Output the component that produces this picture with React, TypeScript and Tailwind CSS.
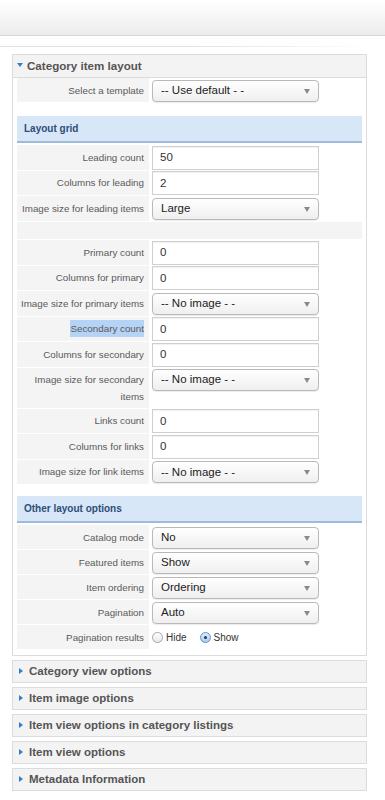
import React from "react";

type Field =
  | { kind: "input"; label: string; value: string; selected?: boolean }
  | { kind: "select"; label: string; value: string; tall?: boolean }
  | { kind: "radio"; label: string }
  | { kind: "spacer" };

const gridFields: Field[] = [
  { kind: "input", label: "Leading count", value: "50" },
  { kind: "input", label: "Columns for leading", value: "2" },
  { kind: "select", label: "Image size for leading items", value: "Large" },
  { kind: "spacer" },
  { kind: "input", label: "Primary count", value: "0" },
  { kind: "input", label: "Columns for primary", value: "0" },
  { kind: "select", label: "Image size for primary items", value: "-- No image - -" },
  { kind: "input", label: "Secondary count", value: "0", selected: true },
  { kind: "input", label: "Columns for secondary", value: "0" },
  { kind: "select", label: "Image size for secondary items", value: "-- No image - -", tall: true },
  { kind: "input", label: "Links count", value: "0" },
  { kind: "input", label: "Columns for links", value: "0" },
  { kind: "select", label: "Image size for link items", value: "-- No image - -" },
];

const otherFields: Field[] = [
  { kind: "select", label: "Catalog mode", value: "No" },
  { kind: "select", label: "Featured items", value: "Show" },
  { kind: "select", label: "Item ordering", value: "Ordering" },
  { kind: "select", label: "Pagination", value: "Auto" },
  { kind: "radio", label: "Pagination results" },
];

const collapsed = [
  "Category view options",
  "Item image options",
  "Item view options in category listings",
  "Item view options",
  "Metadata Information",
];

function Select({ value }: { value: string }) {
  return (
    <div className="relative flex h-[22px] w-[167px] items-center rounded-[4px] border border-[#b9b9b9] bg-gradient-to-b from-white to-[#efefef] pl-[8px] text-[11.5px] text-[#222] shadow-[0_1px_1px_rgba(0,0,0,0.08)]">
      {value}
      <span className="absolute right-[8px] top-[8px] h-0 w-0 border-x-[3px] border-t-[5px] border-x-transparent border-t-[#8a8a8a]" />
    </div>
  );
}

function Input({ value }: { value: string }) {
  return (
    <div className="flex h-[24px] w-[167px] items-center border border-[#cfcfcf] bg-white pl-[7px] text-[11.5px] text-[#333] shadow-[inset_0_1px_1px_rgba(0,0,0,0.06)]">
      {value}
    </div>
  );
}

function Radio({ checked }: { checked?: boolean }) {
  return checked ? (
    <span className="flex h-[11px] w-[11px] items-center justify-center rounded-full border border-[#5f93cf] bg-gradient-to-b from-[#dcebfb] to-[#a9cdf1]">
      <span className="h-[3px] w-[3px] rounded-full bg-[#1d3b5e]" />
    </span>
  ) : (
    <span className="h-[11px] w-[11px] rounded-full border border-[#a5a5a5] bg-gradient-to-b from-white to-[#e9e9e9]" />
  );
}

function Row({ field, h }: { field: Field; h: string }) {
  if (field.kind === "spacer") {
    return <div className="h-[18.5px] border-b border-white bg-[#f4f4f4]" />;
  }
  const tall = field.kind === "select" && field.tall;
  return (
    <div className={`flex ${tall ? "h-[41px]" : h}`}>
      <div className="flex w-[132px] shrink-0 items-center justify-end border-b border-white bg-[#f4f4f4] pr-[5px] text-right text-[9.8px] leading-[17px] whitespace-nowrap text-[#5a5a5a]">
        {tall ? (
          <span>
            Image size for secondary
            <br />
            items
          </span>
        ) : field.kind === "input" && field.selected ? (
          <span className="bg-[#b5d3f5]">{field.label}</span>
        ) : (
          field.label
        )}
      </div>
      <div className={`flex flex-1 pl-[3px] ${tall ? "items-start pt-[1.5px]" : "items-center"}`}>
        {field.kind === "input" && <Input value={field.value} />}
        {field.kind === "select" && <Select value={field.value} />}
        {field.kind === "radio" && (
          <div className="flex items-center text-[10px] text-[#333]">
            <Radio />
            <span className="ml-[3px]">Hide</span>
            <span className="ml-[13px]">
              <Radio checked />
            </span>
            <span className="ml-[3px]">Show</span>
          </div>
        )}
      </div>
    </div>
  );
}

function BlueHeader({ title, mt }: { title: string; mt: string }) {
  return (
    <div className={`${mt} flex h-[27px] items-center border-b-2 border-[#9fbbdc] bg-[#d7e7f8] pl-[7px] text-[10px] font-bold text-[#2d4e78]`}>
      {title}
    </div>
  );
}

function Arrow({ down }: { down?: boolean }) {
  return down ? (
    <span className="mr-[4px] mt-[-2px] h-0 w-0 border-x-[3px] border-t-[4px] border-x-transparent border-t-[#2f7fd0]" />
  ) : (
    <span className="mr-[6px] mt-[-2px] h-0 w-0 border-y-[3px] border-l-[4px] border-y-transparent border-l-[#2f7fd0]" />
  );
}

export default function App() {
  return (
    <div className="h-[800px] w-[385px] overflow-hidden bg-white font-['Liberation_Sans',Arial,sans-serif]">
      <div className="h-[36px] border-b border-[#d6d6d6] bg-gradient-to-b from-white to-[#ececec]" />
      <div className="mt-[10px] h-px w-[375px] bg-gradient-to-r from-[#e2e2e2] via-[#e2e2e2] to-white" />

      <div className="ml-[12px] mt-[7px] flex w-[355px] flex-col">
        <section className="border border-[#dcdcdc]">
          <div className="flex h-[23px] items-center border-b border-[#dcdcdc] bg-[#f3f3f3] pl-[4px] text-[11.6px] font-bold text-[#555]">
            <Arrow down />
            Category item layout
          </div>
          <div className="px-[4px] pb-[5px]">
            <Row field={{ kind: "select", label: "Select a template", value: "-- Use default - -" }} h="h-[25px]" />

            <BlueHeader title="Layout grid" mt="mt-[13px]" />
            <div className="pt-[2px]">
              {gridFields.map((f, i) => (
                <Row key={i} field={f} h="h-[25.5px]" />
              ))}
            </div>

            <BlueHeader title="Other layout options" mt="mt-[11px]" />
            <div className="pt-[2px]">
              {otherFields.map((f, i) => (
                <Row key={i} field={f} h="h-[25px]" />
              ))}
            </div>
          </div>
        </section>

        <div className="mt-[4px] flex flex-col gap-[4px]">
          {collapsed.map((t) => (
            <div
              key={t}
              className="flex h-[23px] items-center border border-[#dcdcdc] bg-[#f3f3f3] pl-[6px] text-[11.5px] font-bold text-[#555]"
            >
              <Arrow />
              {t}
            </div>
          ))}
        </div>
      </div>
    </div>
  );
}
